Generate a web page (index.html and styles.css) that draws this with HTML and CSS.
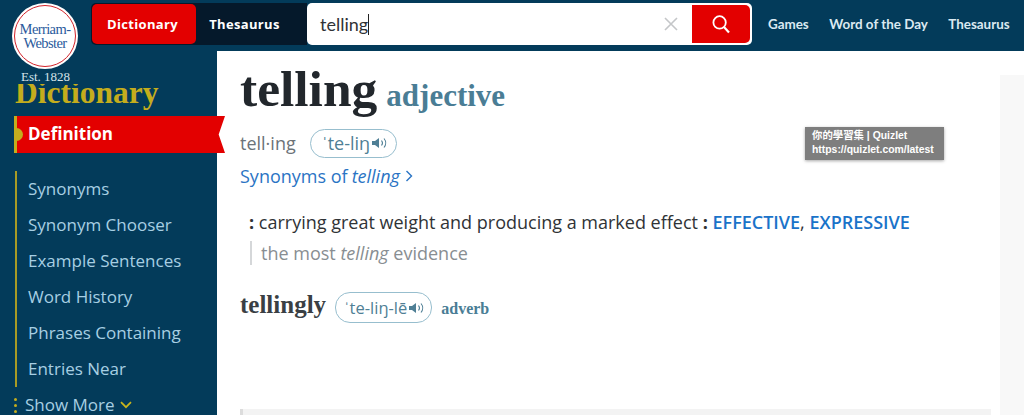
FILE: index.html
```html
<!DOCTYPE html>
<html lang="en">
<head>
<meta charset="utf-8">
<title>telling</title>
<link rel="stylesheet" href="styles.css">
</head>
<body>
<header class="topbar">
  <nav class="tabs">
    <a class="tab tab-active">Dictionary</a>
    <a class="tab">Thesaurus</a>
  </nav>
  <div class="search">
    <span class="search-text">telling<i class="caret"></i></span>
    <svg class="clear" width="14" height="14" viewBox="0 0 14 14"><path d="M1 1l12 12M13 1L1 13" stroke="#c4c6c8" stroke-width="1.6" fill="none"/></svg>
    <button class="search-btn">
      <svg width="20" height="20" viewBox="0 0 20 20"><circle cx="8.6" cy="8.4" r="6.2" fill="none" stroke="#fff" stroke-width="1.8"/><path d="M13 13l5 5.4" stroke="#fff" stroke-width="2.2" fill="none"/></svg>
    </button>
  </div>
  <nav class="links">
    <a>Games</a>
    <a>Word of the Day</a>
    <a>Thesaurus</a>
  </nav>
</header>

<div class="logo">
  <div class="seal"><div class="seal-ring"><span>Merriam-</span><span>Webster</span></div></div>
  <div class="est">Est. 1828</div>
</div>

<div class="page">
  <aside class="side">
    <div class="side-title">Dictionary</div>
    <div class="ribbon">
      <span class="ribbon-text">Definition</span>
    </div>
    <ul class="side-list">
      <li>Synonyms</li>
      <li>Synonym Chooser</li>
      <li>Example Sentences</li>
      <li>Word History</li>
      <li>Phrases Containing</li>
      <li>Entries Near</li>
    </ul>
    <div class="more">
      <span class="dots"><i></i><i></i><i></i></span>
      <span>Show More</span>
      <svg width="12" height="8" viewBox="0 0 12 8"><path d="M1 1.2l5 5 5-5" stroke="#c9b51c" stroke-width="1.7" fill="none"/></svg>
    </div>
  </aside>

  <main class="content">
    <div class="head">
      <h1 class="word">telling</h1>
      <span class="pos">adjective</span>
    </div>
    <div class="pron-row">
      <span class="syll">tell·ing</span>
      <span class="pill"><span class="ipa">ˈte-liŋ</span>
        <svg class="spk" width="16" height="12" viewBox="0 0 16 12"><path d="M0 4h3l4-3v10L3 8H0z" fill="#4f7f95"/><path d="M9.5 3.5a4 4 0 0 1 0 5M12 1.5a7 7 0 0 1 0 9" stroke="#4f7f95" stroke-width="1.1" fill="none"/></svg>
      </span>
    </div>
    <a class="syn-link">Synonyms of <em>telling</em>
      <svg width="8" height="12" viewBox="0 0 8 12"><path d="M1.5 1l5 5-5 5" stroke="#2a74c4" stroke-width="1.4" fill="none"/></svg>
    </a>
    <p class="def"><b>:</b> carrying great weight and producing a marked effect <b>:</b> <a class="xref">EFFECTIVE</a>, <a class="xref">EXPRESSIVE</a></p>
    <p class="example">the most <em>telling</em> evidence</p>
    <div class="runon">
      <span class="runon-word">tellingly</span>
      <span class="pill pill-small"><span class="ipa">ˈte-liŋ-lē</span>
        <svg class="spk" width="16" height="12" viewBox="0 0 16 12"><path d="M0 4h3l4-3v10L3 8H0z" fill="#4f7f95"/><path d="M9.5 3.5a4 4 0 0 1 0 5M12 1.5a7 7 0 0 1 0 9" stroke="#4f7f95" stroke-width="1.1" fill="none"/></svg>
      </span>
      <span class="runon-pos">adverb</span>
    </div>
    <div class="next-block"></div>
  </main>

  <div class="ad"></div>
  <div class="tooltip">你的學習集 | Quizlet<br>https://quizlet.com/latest</div>
</div>
</body>
</html>
```

FILE: styles.css
```css
* { box-sizing: border-box; }
html, body { margin: 0; padding: 0; height: 415px; overflow: hidden; background: #fff; }
body { font-family: "Open Sans", sans-serif; }
a { text-decoration: none; }

.topbar {
  height: 51px;
  background: #033b5a;
  display: flex;
  align-items: flex-start;
  padding: 3px 0 0 91px;
}
.tabs {
  display: flex;
  width: 216px;
  height: 42px;
  background: #05192b;
  border-radius: 5px 0 0 5px;
  padding: 1px;
}
.tab {
  width: 104px;
  padding-right: 3px;
  text-align: center;
  color: #fff;
  font: 700 13px/40px "Open Sans", sans-serif;
  letter-spacing: .35px;
  height: 40px;
}
.tab-active { background: #e30000; border-radius: 5px; }
.tab:last-child { margin-left: -2px; }
.search {
  width: 445px;
  height: 42px;
  background: #fff;
  border-radius: 5px;
  display: flex;
  align-items: center;
  padding: 0 2px 0 13px;
}
.search-text { flex: 1; font: 400 18px/24px "Lato", sans-serif; color: #303336; display: flex; align-items: center; }
.caret { width: 1px; height: 21px; background: #222; display: block; }
.clear { margin-right: 14px; }
.search-btn {
  width: 58px;
  height: 38px;
  border: 0;
  padding: 0;
  background: #e30000;
  border-radius: 0 5px 5px 0;
  display: flex;
  align-items: center;
  justify-content: center;
}
.links {
  display: flex;
  gap: 20.5px;
  margin-left: 16px;
  font: 700 13.4px/42px "Lato", sans-serif;
  color: #dbe9f1;
}

.logo { position: absolute; z-index: 2; left: 9px; top: 0; width: 74px; height: 84px; background: #033b5a; }
.seal {
  position: absolute; left: 3px; top: 3px;
  width: 66px; height: 66px;
  border-radius: 50%;
  background: #fff;
  padding: 2px;
}
.seal-ring {
  width: 100%; height: 100%;
  border: 1.5px solid #d2232a;
  border-radius: 50%;
  display: flex; flex-direction: column; align-items: center; justify-content: center;
  font: 400 14.5px/14px "Liberation Serif", serif;
  color: #2a5a9c;
  letter-spacing: -.6px;
}
.est { position: absolute; left: 12px; top: 69px; font: 400 13px/16px "Liberation Serif", serif; color: #d5e3ea; }

.page { display: flex; height: 364px; position: relative; }
.side { width: 217px; flex: none; background: #033b5a; padding-top: 24px; }
.side-title {
  margin-left: 15px;
  font: 700 31.5px/36px "Liberation Serif", serif;
  color: #c4ad1d;
  height: 36px;
}
.ribbon {
  position: relative;
  margin: 5px 0 0 14px;
  width: 211px;
  height: 37px;
  background: #e30000;
  border-left: 3px solid #c4ad1d;
  clip-path: polygon(0 0, 100% 0, 97% 50%, 100% 100%, 0 100%);
  padding-left: 11px;
  font: 700 17px/36px "Open Sans", sans-serif;
  color: #fff;
}
.ribbon::before {
  content: "";
  position: absolute;
  left: -1px; top: 12px;
  width: 7px; height: 13px;
  border-radius: 0 7px 7px 0;
  background: #c4ad1d;
}
.side-list {
  list-style: none;
  margin: 18px 0 0 15px;
  padding: 0 0 0 11px;
  border-left: 2px solid #a89b25;
  font-size: 17px;
  line-height: 36px;
  color: #a7cfe3;
  height: 216px;
}
.more {
  display: flex;
  align-items: center;
  gap: 5px;
  margin: 0 0 0 14px;
  font-size: 17px;
  line-height: 36px;
  color: #a7cfe3;
}
.dots { display: flex; flex-direction: column; gap: 3px; margin-right: 3px; }
.dots i { width: 3px; height: 3px; border-radius: 50%; background: #c4ad1d; display: block; }

.content { flex: 1; padding: 10px 0 0 23px; position: relative; }
.head { display: flex; align-items: baseline; gap: 9px; height: 56px; }
.word { margin: 0; font: 700 51.5px/56px "Liberation Serif", serif; color: #22272c; }
.pos { font: 700 31px/40px "Liberation Serif", serif; color: #4a7d95; }
.pron-row { display: flex; align-items: center; gap: 14px; margin-top: 11px; height: 30px; }
.syll { font-size: 18px; color: #6c7378; }
.pill {
  display: inline-flex; align-items: center; gap: 2px;
  height: 29px; padding: 0 8px 0 11px;
  border: 1px solid #97bece; border-radius: 15px;
  font-size: 18px; line-height: 26px; color: #4f7f95; background: #fff;
}
.syn-link { display: flex; align-items: center; gap: 5px; margin-top: 3px; font-size: 18px; line-height: 30px; color: #2a74c4; }
.syn-link em { margin-left: -1px; }
.def { margin: 16px 0 0 9px; font-size: 18px; line-height: 30px; color: #303336; }
.xref { color: #1a73c9; font-weight: 600; }
.example { margin: 4px 0 0 10px; padding-left: 9px; border-left: 2px solid #d5d7d9; font-size: 18px; line-height: 24px; color: #888e92; }
.runon { display: flex; align-items: center; gap: 9px; margin-top: 24px; height: 32px; }
.runon-word { font: 700 25px/32px "Liberation Serif", serif; color: #3a3f44; }
.pill-small { height: 31px; padding: 0 6px 0 8px; margin-top: 5px; font-size: 16.5px; }
.runon-pos { font: 700 16px/24px "Liberation Serif", serif; color: #4a7d95; margin-top: 7px; }
.next-block { position: absolute; left: 23px; right: 33px; top: 358px; height: 10px; background: #f3f3f3; border-left: 3px solid #dcdcdc; }

.ad { position: absolute; right: 0; top: 24px; width: 24px; height: 340px; background: #f8f8f8; }
.tooltip {
  position: absolute; left: 805px; top: 76px;
  width: 139px; height: 33px;
  background: #7e7e7e;
  box-shadow: 0 1px 3px rgba(0,0,0,.35);
  color: #fff;
  font: 700 10.4px/14px "Liberation Sans", "Noto Sans CJK TC", sans-serif;
  padding: 2px 7px;
  white-space: nowrap;
  z-index: 1;
}
```
